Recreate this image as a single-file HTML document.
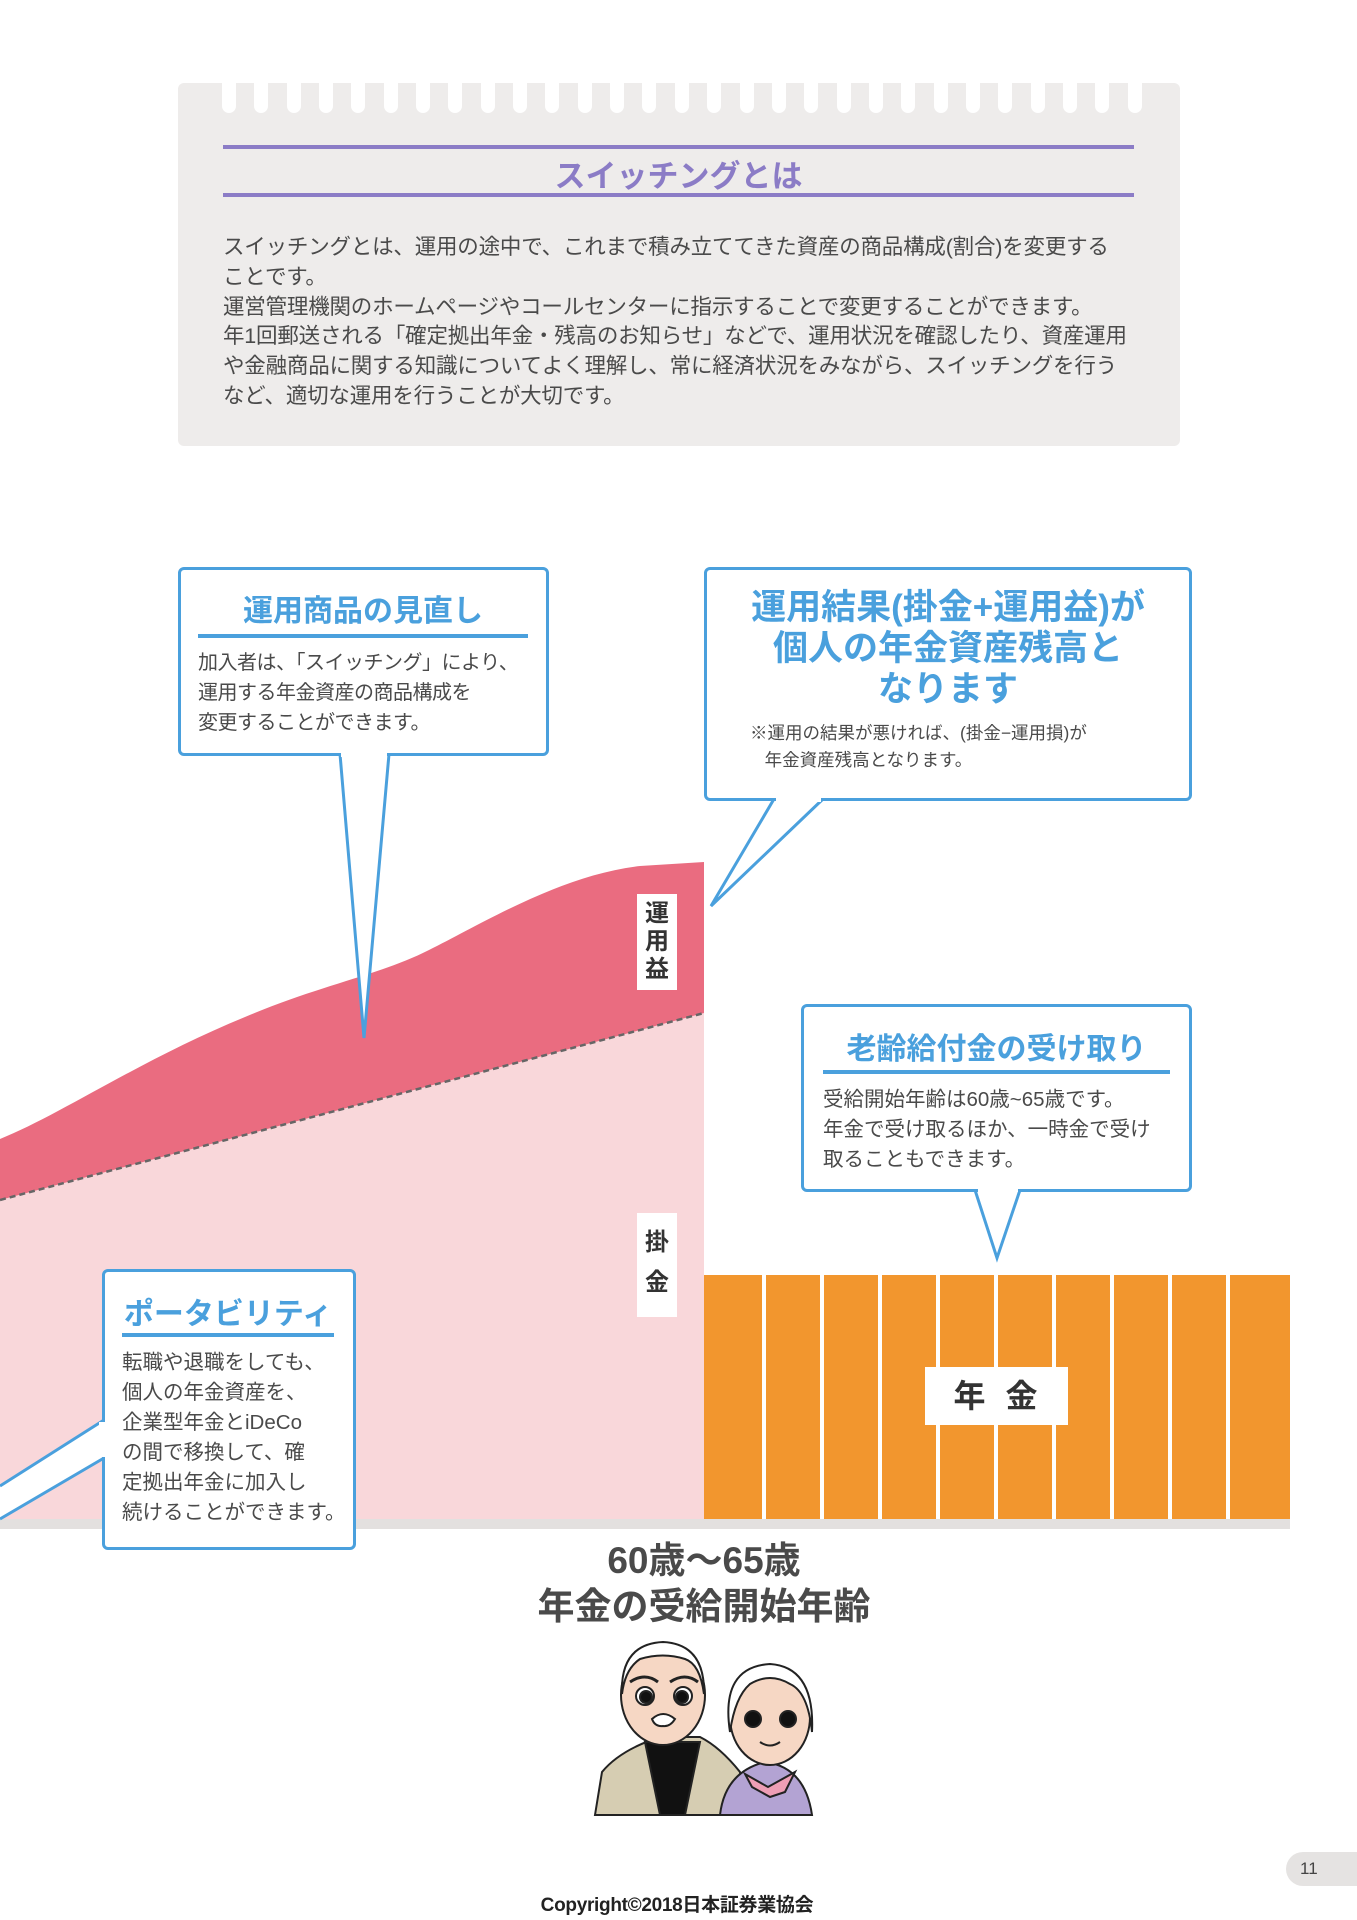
<!DOCTYPE html>
<html><head><meta charset="utf-8">
<style>
*{margin:0;padding:0;box-sizing:border-box}
body{width:1357px;height:1920px;background:#fff;position:relative;overflow:hidden;font-family:"Liberation Sans","Noto Sans CJK JP",sans-serif;color:#444}
.abs{position:absolute}
.card{left:178px;top:83px;width:1002px;height:363px;background:#eeeceb;border-radius:6px}
.pl{left:223px;width:911px;height:4px;background:#8b7cc6}
.ttl{left:223px;width:911px;text-align:center;color:#8b7cc6;font-weight:bold;font-size:31px;top:151px}
.body{left:223px;top:233px;width:930px;font-size:21.5px;line-height:29.8px;color:#4a4a4a;letter-spacing:-0.2px}
.box{border:3px solid #4aa0dd;border-radius:6px;background:#fff}
.bt{color:#4aa0dd;font-weight:bold;text-align:center}
.tx{font-size:20px;line-height:30px;color:#4a4a4a}
.lbl{background:#fff;font-weight:bold;color:#333;text-align:center}
.h{width:14px;height:30px;background:#fff;border-radius:0 0 7px 7px}
</style></head><body>
<div class="abs card"></div>
<div class="abs" style="left:222px;top:83px;width:920px;height:32px;display:flex;justify-content:space-between">
<span class="h"></span><span class="h"></span><span class="h"></span><span class="h"></span><span class="h"></span><span class="h"></span><span class="h"></span><span class="h"></span><span class="h"></span><span class="h"></span><span class="h"></span><span class="h"></span><span class="h"></span><span class="h"></span><span class="h"></span><span class="h"></span><span class="h"></span><span class="h"></span><span class="h"></span><span class="h"></span><span class="h"></span><span class="h"></span><span class="h"></span><span class="h"></span><span class="h"></span><span class="h"></span><span class="h"></span><span class="h"></span><span class="h"></span>
</div>
<div class="abs pl" style="top:145px"></div>
<div class="abs ttl">スイッチングとは</div>
<div class="abs pl" style="top:193px"></div>
<div class="abs body">スイッチングとは、運用の途中で、これまで積み立ててきた資産の商品構成(割合)を変更する<br>ことです。<br>運営管理機関のホームページやコールセンターに指示することで変更することができます。<br>年1回郵送される「確定拠出年金・残高のお知らせ」などで、運用状況を確認したり、資産運用<br>や金融商品に関する知識についてよく理解し、常に経済状況をみながら、スイッチングを行う<br>など、適切な運用を行うことが大切です。</div>

<svg class="abs" style="left:0;top:0" width="1357" height="1920">
<path d="M0 1139 C60 1115 140 1060 245 1017 C320 985 380 975 429 950 C480 925 560 875 640 866 L704 862 L704 1519 L0 1519 Z" fill="#ea6c80"/>
<path d="M0 1200 L704 1013 L704 1519 L0 1519 Z" fill="#f9d7da"/>
<path d="M0 1200 L704 1013" stroke="#666" stroke-width="2.5" stroke-dasharray="6 4"/>
<rect x="0" y="1519" width="1290" height="10" fill="#e3e0df"/>
<g fill="#f2962e">
<rect x="704" y="1275" width="58" height="244"/><rect x="766" y="1275" width="54" height="244"/><rect x="824" y="1275" width="54" height="244"/><rect x="882" y="1275" width="54" height="244"/><rect x="940" y="1275" width="54" height="244"/><rect x="998" y="1275" width="54" height="244"/><rect x="1056" y="1275" width="54" height="244"/><rect x="1114" y="1275" width="54" height="244"/><rect x="1172" y="1275" width="54" height="244"/><rect x="1230" y="1275" width="60" height="244"/>
</g>
<path d="M340 754 L364 1038 L389 754" fill="#fff" stroke="#4aa0dd" stroke-width="3"/>
<path d="M774 799 L711 906 L823 799" fill="#fff" stroke="#4aa0dd" stroke-width="3"/>
<path d="M975 1190 L997 1258 L1020 1190" fill="#fff" stroke="#4aa0dd" stroke-width="3"/>
<path d="M104 1420 L0 1486 L0 1519 L104 1458 Z" fill="#fff"/>
<path d="M104 1420 L0 1486 M0 1519 L104 1458" fill="none" stroke="#4aa0dd" stroke-width="3"/>
</svg>

<div class="abs box" style="left:178px;top:567px;width:371px;height:189px"></div>
<div class="abs bt" style="left:198px;top:586px;width:330px;font-size:30px">運用商品の見直し</div>
<div class="abs" style="left:198px;top:634px;width:330px;height:4px;background:#4aa0dd"></div>
<div class="abs tx" style="left:198px;top:648px;font-size:20px;letter-spacing:-0.5px">加入者は、「スイッチング」により、<br>運用する年金資産の商品構成を<br>変更することができます。</div>

<div class="abs box" style="left:704px;top:567px;width:488px;height:234px"></div>
<div class="abs bt" style="left:706px;top:587px;width:484px;font-size:35px;line-height:41px">運用結果(掛金+運用益)が<br>個人の年金資産残高と<br>なります</div>
<div class="abs tx" style="left:750px;top:720px;font-size:17.5px;line-height:27px">※運用の結果が悪ければ、(掛金−運用損)が<br>&nbsp;&nbsp;&nbsp;年金資産残高となります。</div>

<div class="abs box" style="left:801px;top:1004px;width:391px;height:188px"></div>
<div class="abs bt" style="left:823px;top:1024px;width:347px;font-size:30px">老齢給付金の受け取り</div>
<div class="abs" style="left:823px;top:1070px;width:347px;height:4px;background:#4aa0dd"></div>
<div class="abs tx" style="left:823px;top:1085px;font-size:20.5px">受給開始年齢は60歳~65歳です。<br>年金で受け取るほか、一時金で受け<br>取ることもできます。</div>
<div class="abs" style="left:978px;top:1186px;width:40px;height:6px;background:#fff"></div>
<div class="abs" style="left:341px;top:751px;width:46px;height:6px;background:#fff"></div>
<div class="abs" style="left:776px;top:796px;width:45px;height:6px;background:#fff"></div>

<div class="abs box" style="left:102px;top:1269px;width:254px;height:281px"></div>
<div class="abs" style="left:99px;top:1422px;width:7px;height:35px;background:#fff"></div>
<div class="abs bt" style="left:122px;top:1289px;width:212px;font-size:30px">ポータビリティ</div>
<div class="abs" style="left:122px;top:1333px;width:212px;height:4px;background:#4aa0dd"></div>
<div class="abs tx" style="left:122px;top:1348px;font-size:20.5px;line-height:30px">転職や退職をしても、<br>個人の年金資産を、<br>企業型年金とiDeCo<br>の間で移換して、確<br>定拠出年金に加入し<br>続けることができます。</div>

<div class="abs lbl" style="left:637px;top:894px;width:40px;height:96px;font-size:24px;line-height:28px;padding-top:6px">運<br>用<br>益</div>
<div class="abs lbl" style="left:637px;top:1213px;width:40px;height:104px;font-size:24px;line-height:40px;padding-top:10px">掛<br>金</div>
<div class="abs lbl" style="left:925px;top:1367px;width:143px;height:58px;font-size:32px;line-height:58px;letter-spacing:20px;padding-left:18px">年金</div>

<div class="abs" style="left:404px;top:1538px;width:600px;text-align:center;font-weight:bold;font-size:37px;line-height:46px;color:#4a4a4a">60歳～65歳<br>年金の受給開始年齢</div>

<svg class="abs" style="left:590px;top:1632px" width="260" height="190" stroke="#222" stroke-width="2">
<path d="M5 183 L12 140 Q30 118 70 105 L110 105 Q130 115 150 140 L155 183 Z" fill="#d6cdb2"/>
<path d="M55 110 L70 183 L95 183 L110 110 Z" fill="#111"/>
<ellipse cx="73" cy="63" rx="42" ry="50" fill="#f6d7c4"/>
<path d="M32 62 Q30 12 73 10 Q115 12 114 62 Q110 32 95 27 Q73 20 50 27 Q35 37 32 62Z" fill="#fff"/>
<path d="M40 50 Q55 40 68 50 M80 50 Q95 40 108 50" fill="none" stroke-width="3"/>
<circle cx="55" cy="64" r="9" fill="#fff"/><circle cx="93" cy="64" r="9" fill="#fff"/>
<circle cx="56" cy="65" r="6" fill="#111"/><circle cx="92" cy="65" r="6" fill="#111"/>
<path d="M62 87 Q73 77 85 87 Q80 95 73 94 Q65 95 62 87Z" fill="#fff"/>
<path d="M130 183 Q135 140 175 130 Q215 135 222 183 Z" fill="#b3a3d3"/>
<path d="M155 142 L178 155 L205 140 L195 160 L180 165 L162 155Z" fill="#ee9eb5"/>
<ellipse cx="180" cy="85" rx="40" ry="48" fill="#f6d7c4"/>
<path d="M140 100 Q130 35 180 32 Q225 35 222 100 Q218 60 200 52 Q180 40 160 52 Q145 65 140 100Z" fill="#fff"/>
<circle cx="163" cy="87" r="8" fill="#111"/><circle cx="198" cy="87" r="8" fill="#111"/>
<path d="M170 110 Q180 117 190 110" fill="none"/>
</svg>

<div class="abs" style="left:1286px;top:1852px;width:80px;height:34px;background:#e5e3e2;border-radius:17px 0 0 17px;font-size:17px;line-height:34px;padding-left:14px;color:#444">11</div>
<div class="abs" style="left:377px;top:1890px;width:600px;text-align:center;font-size:19px;color:#222;font-weight:bold;letter-spacing:-0.3px">Copyright©2018日本証券業協会</div>
</body></html>
